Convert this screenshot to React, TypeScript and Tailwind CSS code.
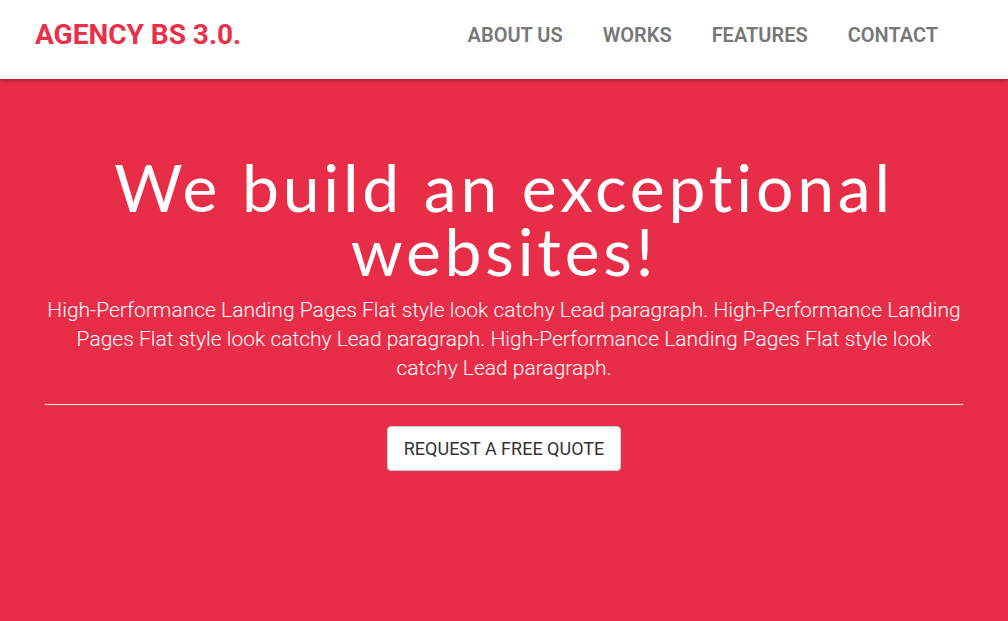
export default function App() {
  return (
    <div className="min-h-[621px] flex flex-col bg-[#e82d48]" style={{ fontFamily: "Roboto, 'Liberation Sans', sans-serif" }}>
      <header className="relative z-10 h-[79px] bg-white flex items-center justify-between pl-[35px] pr-[70px] pb-[10px] shadow-[0_2px_4px_rgba(0,0,0,0.25)]">
        <div className="text-[28px] font-bold text-[#e8304a] leading-none">AGENCY BS 3.0.</div>
        <nav className="flex gap-[40px] text-[20px] font-semibold text-[#777777] leading-none">
          <a>ABOUT US</a>
          <a>WORKS</a>
          <a>FEATURES</a>
          <a>CONTACT</a>
        </nav>
      </header>
      <section className="flex-1 flex flex-col items-center px-[45px] pt-[76px] text-white text-center">
        <h1 className="text-[66px] leading-[64px] font-normal tracking-[3.8px]" style={{ fontFamily: "Lato, 'Noto Sans', sans-serif" }}>
          We build an exceptional<br />websites!
        </h1>
        <p className="mt-[13px] text-[21px] leading-[29px] font-light">
          High-Performance Landing Pages Flat style look catchy Lead paragraph. High-Performance Landing Pages Flat style look catchy Lead paragraph. High-Performance Landing Pages Flat style look catchy Lead paragraph.
        </p>
        <hr className="w-full mt-[21px] border-0 border-t border-white/90" />
        <button className="mt-[21px] h-[45px] px-[16px] bg-white rounded-[4px] border border-[#cccccc] text-[#333333] text-[18px] leading-none">
          REQUEST A FREE QUOTE
        </button>
      </section>
    </div>
  );
}
